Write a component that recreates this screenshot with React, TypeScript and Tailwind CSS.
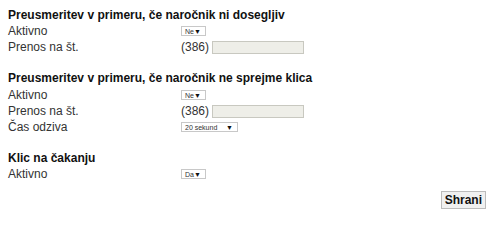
const font = { fontFamily: '"Liberation Sans", Arial, sans-serif' };

function Sel({ value, w }: { value: string; w: string }) {
  return (
    <div
      className={`flex h-[10px] items-center justify-between border border-[#c8c8c8] bg-white pl-[3px] pr-[4px] text-[7px] leading-none text-[#333] ${w}`}
    >
      <span>{value}</span>
      <span className="text-[7px] text-[#111]">▼</span>
    </div>
  );
}

function Row({ label, children }: { label: string; children: React.ReactNode }) {
  return (
    <div className="flex h-[16px] items-center">
      <div className="w-[173px] text-[12px] leading-none text-[#333]">{label}</div>
      {children}
    </div>
  );
}

function Phone() {
  return (
    <div className="flex items-center gap-[3px]">
      <span className="text-[12px] leading-none text-[#333]">(386)</span>
      <div className="h-[13px] w-[92px] border border-[#c8c8c0] bg-[#eeeee8]" />
    </div>
  );
}

export default function App() {
  return (
    <div className="relative h-[228px] w-[500px] bg-white px-[8px] pt-[8px]" style={font}>
      <h2 className="h-[15px] text-[12px] font-bold leading-[15px] text-[#111]">
        Preusmeritev v primeru, če naročnik ni dosegljiv
      </h2>
      <div>
        <Row label="Aktivno">
          <Sel value="Ne" w="w-[25px]" />
        </Row>
        <Row label="Prenos na št.">
          <Phone />
        </Row>
      </div>

      <h2 className="mt-[16px] h-[15px] text-[12px] font-bold leading-[15px] text-[#111]">
        Preusmeritev v primeru, če naročnik ne sprejme klica
      </h2>
      <div className="mt-[1px]">
        <Row label="Aktivno">
          <Sel value="Ne" w="w-[25px]" />
        </Row>
        <Row label="Prenos na št.">
          <Phone />
        </Row>
        <Row label="Čas odziva">
          <Sel value="20 sekund" w="w-[57px]" />
        </Row>
      </div>

      <h2 className="mt-[16px] h-[15px] text-[12px] font-bold leading-[15px] text-[#111]">
        Klic na čakanju
      </h2>
      <div>
        <Row label="Aktivno">
          <Sel value="Da" w="w-[25px]" />
        </Row>
      </div>

      <div className="mt-[9px] flex justify-end pr-[6px]">
        <button className="h-[18px] border border-[#bbb] bg-[#f0f0f0] px-[3px] text-[12px] font-bold leading-none text-[#111]">
          Shrani
        </button>
      </div>
    </div>
  );
}
